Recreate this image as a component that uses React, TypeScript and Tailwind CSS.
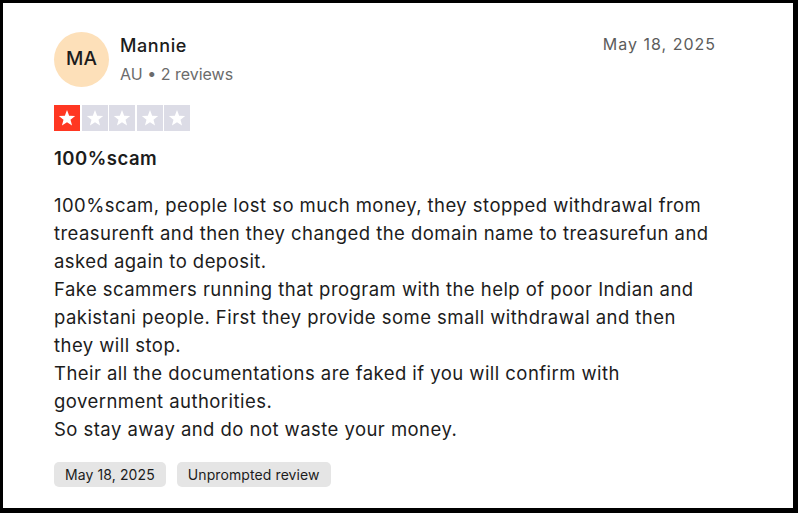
import { FC } from "react";

const Star: FC<{ filled: boolean }> = ({ filled }) => (
  <div
    className={`w-[26px] h-[26px] flex items-center justify-center ${
      filled ? "bg-[#ff3722]" : "bg-[#dcdce6]"
    }`}
  >
    <svg width="20" height="20" viewBox="0 0 24 24">
      <polygon
        fill="white"
        points="12,2.5 14.6,9.3 21.8,9.6 16.2,14.1 18.1,21.1 12,17.1 5.9,21.1 7.8,14.1 2.2,9.6 9.4,9.3"
      />
    </svg>
  </div>
);

const lines = [
  "100%scam, people lost so much money, they stopped withdrawal from treasurenft and then they changed the domain name to treasurefun and asked again to deposit.",
  "Fake scammers running that program with the help of poor Indian and pakistani people. First they provide some small withdrawal and then they will stop.",
  "Their all the documentations are faked if you will confirm with government authorities.",
  "So stay away and do not waste your money.",
];

export default function App() {
  return (
    <div className="w-[800px] h-[519px] bg-white font-['Inter',sans-serif] text-[#1c1c1c]">
      <div className="w-[798px] h-[513px] border-t-[3px] border-l-[3px] border-r-[5px] border-b-[5px] border-black bg-white pl-[51px] pr-[77px] pt-[29px]">
        <div className="flex justify-between items-start">
          <div className="flex items-center gap-[11px]">
            <div className="w-[55px] h-[55px] rounded-full bg-[#fde0b9] flex items-center justify-center text-[19px] font-medium">
              MA
            </div>
            <div className="flex flex-col">
              <span className="text-[18px] font-medium leading-[24px] tracking-[0.6px]">
                Mannie
              </span>
              <span className="text-[16px] leading-[24px] text-[#6b6b6b] mt-[4px]">
                AU • 2 reviews
              </span>
            </div>
          </div>
          <span className="text-[16px] leading-[24px] text-[#5c5c5c] tracking-[1px]">
            May 18, 2025
          </span>
        </div>

        <div className="flex gap-[1.5px] mt-[18px]">
          <Star filled />
          <Star filled={false} />
          <Star filled={false} />
          <Star filled={false} />
          <Star filled={false} />
        </div>

        <h2 className="text-[18.5px] font-semibold leading-[24px] mt-[15px] tracking-[0.5px]">
          100%scam
        </h2>

        <div className="mt-[21px] text-[18.5px] leading-[28px] tracking-[0.45px]">
          {lines.map((l) => (
            <p key={l}>{l}</p>
          ))}
        </div>

        <div className="flex gap-[11px] mt-[19px]">
          <span className="bg-[#e5e5e5] rounded-[5px] px-[11px] h-[25px] flex items-center text-[14px] tracking-[0.1px]">
            May 18, 2025
          </span>
          <span className="bg-[#e5e5e5] rounded-[5px] px-[11px] h-[25px] flex items-center text-[14px] tracking-[0.1px]">
            Unprompted review
          </span>
        </div>
      </div>
    </div>
  );
}
